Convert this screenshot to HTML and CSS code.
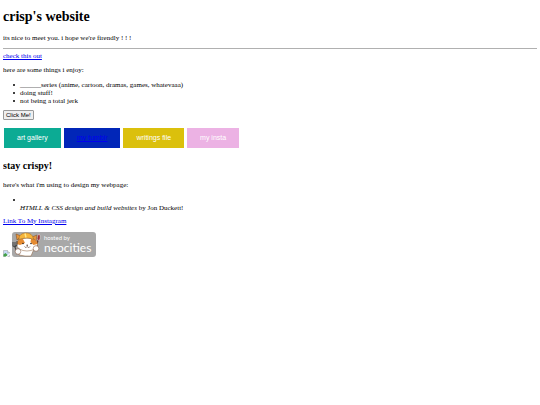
FILE: index.html
```
<!DOCTYPE html>
<html lang="en">
<head>
<meta charset="UTF-8">
<meta name="viewport" content="width=device-width, initial-scale=1.0">
<title>crisp's website</title>
<link rel="stylesheet" href="styles.css">
</head>
<body>

<h1>crisp's website</h1>
<p>its nice to meet you. i hope we're firendly ! ! !</p>
<hr>
<a href="#">check this out</a>

<p>here are some things i enjoy:</p>
<ul>
  <li>______series (anime, cartoon, dramas, games, whatevaaa)</li>
  <li>doing stuff!</li>
  <li>not being a total jerk</li>
</ul>

<button type="button" class="click-button">Click Me!</button>

<div class="button-row">
  <button type="button" class="button gallery">art gallery</button>
  <button type="button" class="button tumblr">my tumblr</button>
  <button type="button" class="button writings">writings file</button>
  <button type="button" class="button insta">my insta</button>
</div>

<h2>stay crispy!</h2>
<p>here's what i'm using to design my webpage:</p>
<ul class="books">
  <li><p><em>HTMLL &amp; CSS design and build websites</em> by Jon Duckett!</p></li>
</ul>

<a href="#">Link To My Instagram</a>

<div class="footer">
  <svg class="missing" viewBox="0 0 14 14" role="img" aria-label="missing image">
    <path d="M1 1h8l4 4v8H1z" fill="#c6d9f5" stroke="#9a9a9a"/>
    <path d="M9 1v4h4" fill="#fff" stroke="#9a9a9a"/>
    <path d="M1 13V9l4-3 5 5-3 2z" fill="#43a047"/>
    <path d="M5 14l9-8v3l-6 5z" fill="#fff"/>
  </svg>
  <a href="#" class="badge">
    <svg class="cat" viewBox="0 0 30 25" aria-hidden="true">
      <!-- brush -->
      <path d="M26.500 6l-3 12" stroke="#6b3b2a" stroke-width="1.300"/>
      <path d="M25.500 8c-.8-2 0-4.500 1.500-6 1.500 1.500 1.500 4 .3 6.500z" fill="#9c2f35" stroke="#fff" stroke-width=".4"/>
      <!-- body and head -->
      <path d="M8 15l-1 8 6 1h6l3-7z" fill="#fff" stroke="#8a5a32" stroke-width=".5"/>
      <path d="M5 8L4 2l5 2zM20 5l5-2-1 6z" fill="#e8963a" stroke="#7a4a22" stroke-width=".5"/>
      <ellipse cx="15" cy="12.500" rx="10.500" ry="6.500" fill="#fff" stroke="#8a5a32" stroke-width=".5"/>
      <path d="M4.800 12C4.500 9 7 7 11 7l2 4-5 2zM19 7c4 0 6.500 2 6.500 5l-4 1-3-3z" fill="#e58b32"/>
      <!-- hard hat -->
      <path d="M7 7c0-4 3-6 7-6s7 2 7.500 6.500C17 5.500 12 5.500 6 8z" fill="#f6b53b" stroke="#a8702a" stroke-width=".6"/>
      <path d="M13 1.500l1 4" stroke="#ffe98a" stroke-width="1.400"/>
      <!-- face -->
      <circle cx="11" cy="11.500" r=".8" fill="#302018"/>
      <circle cx="19" cy="11.500" r=".8" fill="#302018"/>
      <path d="M14.500 13h1.500l-.8.8zM12.500 14.500c1 1.500 2 1 2.700 0 .8 1 2 1.500 2.800 0" fill="none" stroke="#503020" stroke-width=".6"/>
      <!-- fork and paws -->
      <path d="M1 10v4l2 1 2-2V9M3 10v5l2 7" fill="none" stroke="#484848" stroke-width="1.100"/>
      <circle cx="6" cy="19.500" r="2.800" fill="#fff" stroke="#7a4a32" stroke-width=".5"/>
      <circle cx="24" cy="16.500" r="2.800" fill="#fff" stroke="#7a4a32" stroke-width=".5"/>
    </svg>
    <span class="badge-text">
      <span class="hosted">hosted by</span>
      <span class="neocities">neocities</span>
    </span>
  </a>
</div>

</body>
</html>
```

FILE: styles.css
```
body {
  margin: 9px 3px;
  background-color: white;
  font-family: "Liberation Serif", "Times New Roman", serif;
  font-size: 7px;
  line-height: 8px;
}

h1 {
  margin: 0 0 9px;
  font-size: 14px;
  line-height: 16px;
}

h2 {
  margin: 12px 0 9px;
  font-size: 10px;
  line-height: 12px;
}

p {
  margin: 6px 0;
}

hr {
  margin: 6px 0 3px;
  border: 0;
  border-top: 1px solid #b0b0b0;
}

a {
  color: #0000ee;
}

ul {
  margin: 7px 0 5px;
  padding-left: 17px;
  list-style: none;
}

li::before {
  content: "";
  float: left;
  width: 2px;
  height: 2px;
  margin: 3px 0 0 -7px;
  border-radius: 50%;
  background-color: black;
}

/* the bullet sits on a line of its own above the text */
.books p {
  margin: 0;
  padding-top: 8px;
}

.click-button {
  display: block;
  padding: 0 2px;
  border: 1px solid #999;
  border-radius: 1px;
  background-color: #efefef;
  color: black;
  font-family: "Liberation Sans", Arial, sans-serif;
  font-size: 6px;
  line-height: 8px;
}

.button-row {
  display: flex;
  gap: 3px;
  margin: 8px 1px 0;
}

.button {
  padding: 6px 13px;
  border: 0;
  color: white;
  font-family: "Liberation Sans", Arial, sans-serif;
  font-size: 7px;
  line-height: 8px;
}

.gallery {
  background-color: #0cab94;
}

.tumblr {
  background-color: #0126b8;
  color: #0000ee;
  text-decoration: underline;
}

.writings {
  background-color: #dbc00c;
}

.insta {
  background-color: #ecb2e4;
}

.footer {
  display: flex;
  align-items: flex-end;
  gap: 2px;
  margin-top: 7px;
}

.missing {
  width: 7px;
  height: 7px;
}

.badge {
  display: flex;
  padding-right: 5px;
  border-radius: 3px;
  background-color: #a8a8a8;
  color: white;
  font-family: Lato, sans-serif;
  text-decoration: none;
}

.cat {
  width: 30px;
  height: 25px;
}

.badge-text {
  display: flex;
  flex-direction: column;
  padding: 2px 0 0 2px;
}

.hosted {
  font-size: 6px;
  line-height: 7px;
}

.neocities {
  font-size: 12px;
  line-height: 14px;
}
```
